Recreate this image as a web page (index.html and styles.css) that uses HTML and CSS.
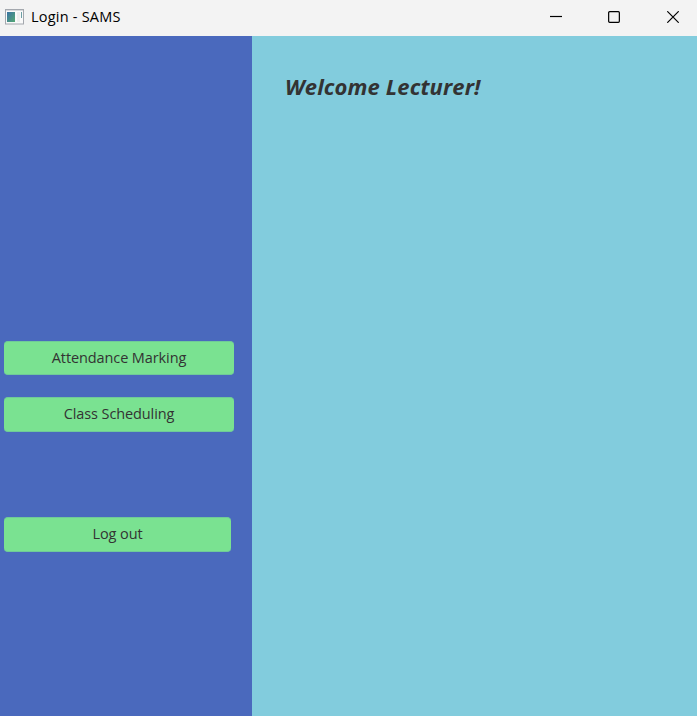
FILE: index.html
```html
<!DOCTYPE html>
<html lang="en">
<head>
<meta charset="utf-8">
<title>Login - SAMS</title>
<link rel="stylesheet" href="styles.css">
</head>
<body>
<div class="window">
  <header class="titlebar">
    <svg class="app-icon" width="19" height="16" viewBox="0 0 19 16">
      <defs><linearGradient id="screen" x1="0" y1="0" x2="1" y2="1"><stop offset="0" stop-color="#3a72a4"/><stop offset="1" stop-color="#54a873"/></linearGradient></defs>
      <rect x=".5" y=".5" width="18" height="14.5" fill="#fafafa" stroke="#a4a8ae"/>
      <path d="M0 .7H19" stroke="#a4a8ae" stroke-width="1.4"/>
      <rect x="2" y="3" width="8" height="10" fill="url(#screen)"/>
      <path d="M12 3h3v10h-3z" fill="#eee"/>
      <path d="M16.5 3v6" stroke="#6d9fa5"/>
    </svg>
    <span class="title">Login - SAMS</span>
    <div class="controls">
      <svg width="12" height="12" viewBox="0 0 12 12"><path d="M0 5.5H12"/></svg>
      <svg width="12" height="12" viewBox="0 0 12 12"><rect x=".65" y=".65" width="10.7" height="10.7" rx="1"/></svg>
      <svg width="12" height="12" viewBox="0 0 12 12"><path d="M.3.3 11.7 11.7M11.7.3.3 11.7"/></svg>
    </div>
  </header>
  <div class="body">
    <nav class="sidebar">
      <button class="btn attendance">Attendance Marking</button>
      <button class="btn schedule">Class Scheduling</button>
      <button class="btn logout">Log out</button>
    </nav>
    <main class="content"><h1 class="welcome">Welcome Lecturer!</h1></main>
  </div>
</div>
</body>
</html>
```
FILE: styles.css
```css
* { box-sizing: border-box; }
body { margin: 0; font-family: "Open Sans", "Noto Sans", sans-serif; }
.window { width: 697px; height: 716px; display: flex; flex-direction: column; overflow: hidden; }
.titlebar { height: 36px; flex: none; display: flex; align-items: center; padding: 0 18px 0 5px; background: #f3f3f3; color: #000; }
.app-icon { margin-top: -2px; }
.title { margin: -2px 0 0 7px; font-size: 14.5px; letter-spacing: .22px; line-height: 20px; white-space: nowrap; }
.controls { margin-left: auto; margin-top: -2px; display: flex; gap: 47px; }
.controls svg { fill: none; stroke: #000; stroke-width: 1.2; }
.controls svg:first-child { margin-right: -1px; }
.body { flex: 1; display: flex; }
.sidebar { width: 252px; background: #4a69bd; padding: 305px 0 0 4px; display: flex; flex-direction: column; align-items: flex-start; }
.btn { width: 230px; height: 34px; padding: 0 0 2px; border: 1px solid #6fcb98; border-width: 1px 0; border-radius: 4px; background: #7ae291; color: #333; font: 14.5px/20px "Open Sans", "Noto Sans", sans-serif; letter-spacing: -.1px; }
.attendance { padding-bottom: 0; }
.schedule { margin-top: 22px; height: 35px; }
.logout { margin-top: 85px; width: 227px; height: 35px; }
.content { flex: 1; background: #82ccdd; padding: 34px 0 0 33px; }
.welcome { margin: 0; color: #333; font-size: 22px; line-height: 32px; font-style: italic; font-weight: 700; letter-spacing: .12px; white-space: nowrap; }
```
